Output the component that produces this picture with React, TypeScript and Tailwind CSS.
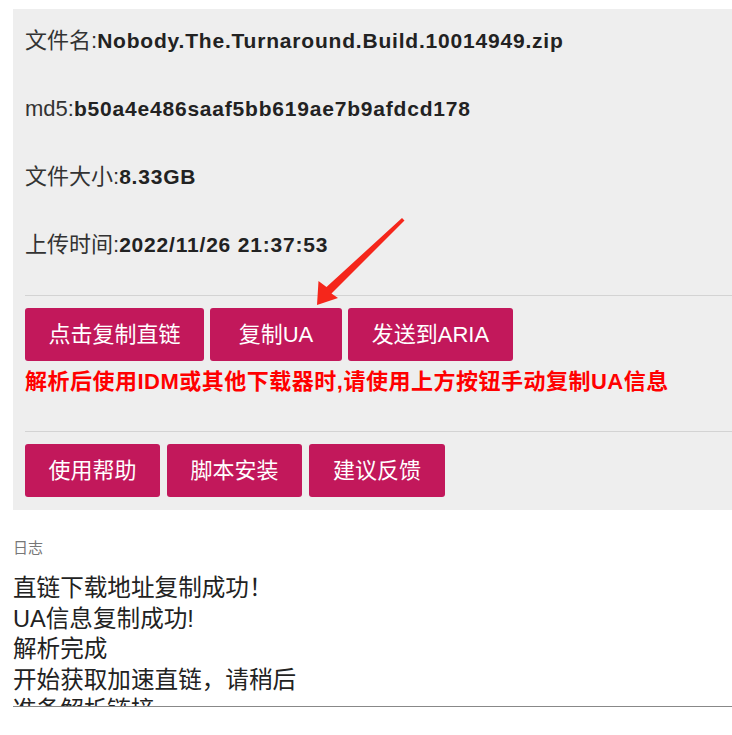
const font = "font-['Arial','Liberation_Sans','Noto_Sans_CJK_SC',sans-serif]";

function Btn({ children, w }: { children: React.ReactNode; w: string }) {
  return (
    <button
      className={`${w} h-[53px] rounded-[3px] bg-[#c2185b] text-[22px] text-white flex items-center justify-center`}
    >
      {children}
    </button>
  );
}

function Row({ label, value }: { label: string; value: string }) {
  return (
    <p className="text-[22px] leading-[28px] text-[#333]">
      {label}:<b className="text-[21px] tracking-[0.8px] text-[#222]">{value}</b>
    </p>
  );
}

export default function App() {
  return (
    <div className={`relative w-[732px] h-[735px] bg-white ${font}`}>
      <div className="ml-[13px] mt-[9px] bg-[#eeeeee]">
        <div className="flex flex-col gap-[40px] px-[12px] pt-[18px]">
          <Row label="文件名" value="Nobody.The.Turnaround.Build.10014949.zip" />
          <Row label="md5" value="b50a4e486saaf5bb619ae7b9afdcd178" />
          <Row label="文件大小" value="8.33GB" />
          <Row label="上传时间" value="2022/11/26 21:37:53" />
        </div>
        <div className="ml-[12px] mt-[36px] border-t border-[#d3d3d3]" />
        <div className="flex gap-[6px] px-[12px] pt-[12px]">
          <Btn w="w-[179px]">点击复制直链</Btn>
          <Btn w="w-[132px]">复制UA</Btn>
          <Btn w="w-[165px]">发送到ARIA</Btn>
        </div>
        <p className="px-[12px] pt-[7px] text-[22px] leading-[28px] tracking-[0.5px] font-bold text-[#ff0000]">
          解析后使用IDM或其他下载器时,请使用上方按钮手动复制UA信息
        </p>
        <div className="ml-[12px] mt-[35px] border-t border-[#d3d3d3]" />
        <div className="flex gap-[7px] px-[12px] pt-[12px] pb-[13px]">
          <Btn w="w-[135px]">使用帮助</Btn>
          <Btn w="w-[135px]">脚本安装</Btn>
          <Btn w="w-[136px]">建议反馈</Btn>
        </div>
      </div>

      <div className="ml-[13px] mt-[28px]">
        <p className="text-[15px] leading-[20px] text-[#777]">日志</p>
        <div className="mt-[15px] h-[134px] overflow-hidden border-b border-[#888] text-[23.6px] leading-[30.5px] text-[#222]">
          <p>直链下载地址复制成功！</p>
          <p>UA信息复制成功!</p>
          <p>解析完成</p>
          <p>开始获取加速直链，请稍后</p>
          <p>准备解析链接</p>
        </div>
      </div>

      <svg className="absolute left-0 top-0 pointer-events-none" width="732" height="735">
        <polygon
          points="317,296 318.5,272 326.5,278 402,209 404.5,211.5 331.5,284.5 338,289"
          fill="#f5261b"
        />
      </svg>
    </div>
  );
}
